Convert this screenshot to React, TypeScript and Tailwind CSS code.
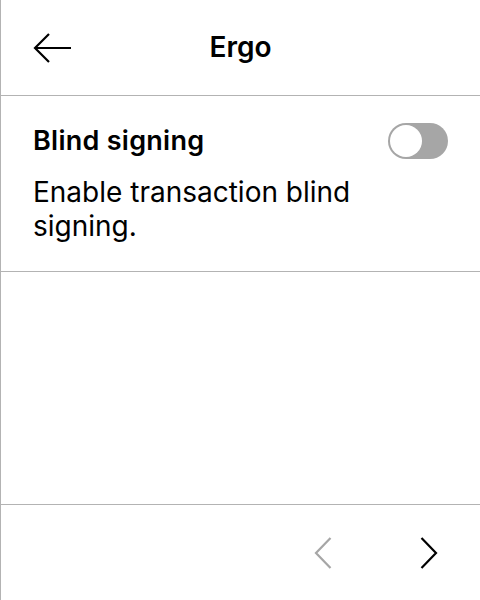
import React from "react";

export default function App() {
  return (
    <div
      className="w-[480px] h-[600px] bg-white flex flex-col border-l border-[#b3b3b3] text-black"
      style={{ fontFamily: "Inter, 'Noto Sans', sans-serif" }}
    >
      <div className="h-[96px] shrink-0 flex items-center border-b border-[#b3b3b3] relative">
        <svg width="40" height="32" viewBox="0 0 40 32" className="ml-[31px]" fill="none" stroke="black" strokeWidth="2.2">
          <path d="M39 16H3M17 2L3 16l14 14" />
        </svg>
        <div className="absolute inset-0 flex items-center justify-center text-[28px] leading-[34px] font-semibold pb-[1px]">Ergo</div>
      </div>
      <div className="shrink-0 h-[176px] border-b border-[#b3b3b3] px-[32px] pt-[27px]">
        <div className="flex items-center justify-between">
          <div className="text-[27px] font-semibold leading-[34px] tracking-[0.01em]">Blind signing</div>
          <div className="w-[60px] h-[36px] rounded-full bg-[#a6a6a6] p-[2px] flex items-center">
            <div className="w-[32px] h-[32px] rounded-full bg-white" />
          </div>
        </div>
        <div className="mt-[16px] text-[28px] leading-[34px] pr-[80px]">Enable transaction blind signing.</div>
      </div>
      <div className="flex-1 border-b border-[#b3b3b3]" />
      <div className="h-[95px] shrink-0 flex items-center justify-end pr-[42px] gap-[88px]">
        <svg width="18" height="32" viewBox="0 0 18 32" fill="none" stroke="#a6a6a6" strokeWidth="2.2">
          <path d="M16.5 1L2 16l14.5 15" />
        </svg>
        <svg width="18" height="32" viewBox="0 0 18 32" fill="none" stroke="black" strokeWidth="2.2">
          <path d="M1.5 1L16 16 1.5 31" />
        </svg>
      </div>
    </div>
  );
}
